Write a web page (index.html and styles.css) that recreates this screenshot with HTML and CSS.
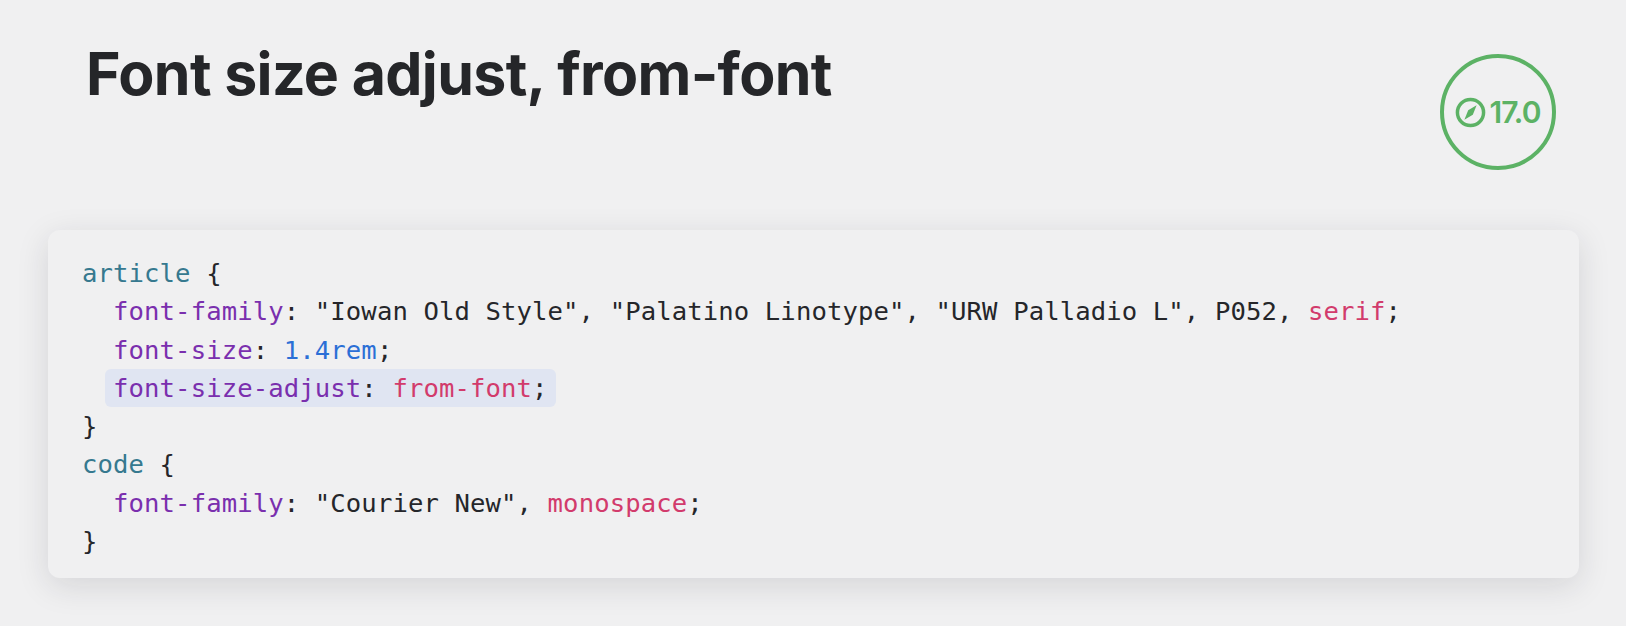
FILE: index.html
```html
<!DOCTYPE html>
<html lang="en">
<head>
<meta charset="utf-8">
<title>Font size adjust, from-font</title>
<link rel="stylesheet" href="styles.css">
</head>
<body>
<header class="head">
  <h1 class="title">Font size adjust, from-font</h1>
  <div class="badge">
    <svg class="compass" viewBox="0 0 32 32" aria-hidden="true">
      <circle cx="16" cy="16" r="13.5" fill="none" stroke="currentColor" stroke-width="3.6"/>
      <path d="M22.3 8.6 L18.4 18.4 L9.7 23.4 L13.6 13.6 Z" fill="currentColor"/>
    </svg>
    <span class="version">17.0</span>
  </div>
</header>
<pre class="code"><code><span class="line"><span class="sel">article</span> {</span>
<span class="line">  <span class="prop">font-family</span>: "Iowan Old Style", "Palatino Linotype", "URW Palladio L", P052, <span class="kw">serif</span>;</span>
<span class="line">  <span class="prop">font-size</span>: <span class="num">1.4rem</span>;</span>
<span class="line">  <span class="mark"><span class="prop">font-size-adjust</span>: <span class="kw">from-font</span>;</span></span>
<span class="line">}</span>
<span class="line"><span class="sel">code</span> {</span>
<span class="line">  <span class="prop">font-family</span>: "Courier New", <span class="kw">monospace</span>;</span>
<span class="line">}</span></code></pre>
</body>
</html>
```
FILE: styles.css
```css
* { box-sizing: border-box; }
html, body { height: 100%; }
body {
  margin: 0;
  height: 626px;
  overflow: hidden;
  background: #f0f0f1;
  font-family: "Inter", "Liberation Sans", sans-serif;
  padding: 0 47px 0 48px;
}
.head {
  display: flex;
  justify-content: space-between;
  align-items: flex-start;
  height: 230px;
  padding: 38px 23px 0 38px;
}
.title {
  margin: 0;
  font-size: 59px;
  line-height: 72px;
  font-weight: 700;
  letter-spacing: -0.65px;
  color: #252629;
}
.badge {
  width: 116px;
  height: 116px;
  margin-top: 16px;
  border: 4px solid #5cb265;
  border-radius: 50%;
  color: #5cb265;
  display: flex;
  align-items: center;
  justify-content: center;
  gap: 3px;
}
.compass { width: 31px; height: 31px; flex: none; }
.version {
  font-size: 30px;
  font-weight: 600;
  letter-spacing: -0.9px;
}
.code {
  margin: 0;
  height: 348px;
  padding: 24px 34px;
  background: #f0f0f1;
  border-radius: 12px;
  box-shadow: 0 8px 32px rgba(30, 30, 50, 0.13);
  font-family: "DejaVu Sans Mono", "Liberation Mono", monospace;
  font-size: 25.6px;
  letter-spacing: 0.11px;
  line-height: 38.3px;
  color: #25262a;
}
.code code { font: inherit; display: block; }
.line { display: inline; }
.sel { color: #36798f; }
.prop { color: #7a2fae; }
.kw { color: #d23b6c; }
.num { color: #2b6fd6; }
.mark {
  background: #e0e5f2;
  border-radius: 6px;
  padding: 4px 8px;
  margin: 0 -8px;
}
```
